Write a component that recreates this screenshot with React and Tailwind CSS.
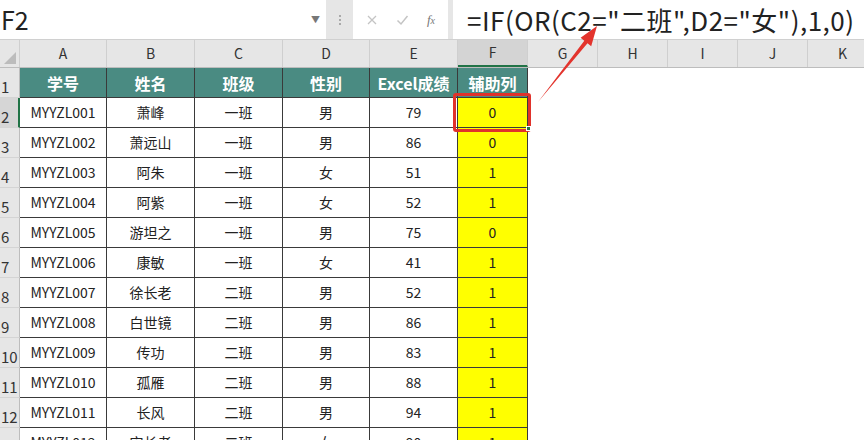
import React from "react";

const rows = [
  ["MYYZL001", "萧峰", "一班", "男", "79", "0"],
  ["MYYZL002", "萧远山", "一班", "男", "86", "0"],
  ["MYYZL003", "阿朱", "一班", "女", "51", "1"],
  ["MYYZL004", "阿紫", "一班", "女", "52", "1"],
  ["MYYZL005", "游坦之", "一班", "男", "75", "0"],
  ["MYYZL006", "康敏", "一班", "女", "41", "1"],
  ["MYYZL007", "徐长老", "二班", "男", "52", "1"],
  ["MYYZL008", "白世镜", "二班", "男", "86", "1"],
  ["MYYZL009", "传功", "二班", "男", "83", "1"],
  ["MYYZL010", "孤雁", "二班", "男", "88", "1"],
  ["MYYZL011", "长风", "二班", "男", "94", "1"],
  ["MYYZL012", "宋长老", "二班", "女", "90", "1"],
];

const cols = "grid-cols-[20px_87px_88px_88px_87px_88px_70px_70px_70px_70px_70px_70px_70px]";
const letters = ["A", "B", "C", "D", "E", "F", "G", "H", "I", "J", "K", "L"];
const heads = ["学号", "姓名", "班级", "性别", "Excel成绩", "辅助列"];

function RowLabel({ n, sel }) {
  return (
    <div
      className={`h-[30px] flex items-end pb-[3px] pl-[1px] text-[15px] leading-none text-[#333] border-b border-[#d4d4d4] ${
        sel ? "bg-[#d6d6d6] border-r-2 border-r-[#217346]" : "bg-[#e6e6e6] border-r border-r-[#bdbdbd]"
      }`}
    >
      {n}
    </div>
  );
}

export default function App() {
  return (
    <div
      className="relative w-[864px] h-[440px] overflow-hidden bg-white"
      style={{ fontFamily: '"Noto Sans CJK SC", "Noto Sans", sans-serif' }}
    >
      {/* formula bar */}
      <div className="flex h-[40px] bg-[#e6e6e6] border-b border-[#d0d0d0]">
        <div className="w-[326px] h-[39px] bg-white flex items-center justify-between pl-[1px] pr-[6px]">
          <span className="text-[25px] leading-none text-[#222]">F2</span>
          <span className="text-[9px] text-[#777]">▼</span>
        </div>
        <div className="w-[27px] flex items-center justify-center">
          <div className="flex flex-col gap-[2px]">
            <span className="w-[2px] h-[2px] bg-[#aaa]" />
            <span className="w-[2px] h-[2px] bg-[#aaa]" />
            <span className="w-[2px] h-[2px] bg-[#aaa]" />
          </div>
        </div>
        <div className="w-[95px] h-[39px] bg-white flex items-center justify-around px-[4px] text-[#bbb]">
          <svg width="12" height="12" viewBox="0 0 12 12">
            <path d="M2 2L10 10M10 2L2 10" stroke="#c4c4c4" strokeWidth="1.3" />
          </svg>
          <svg width="13" height="12" viewBox="0 0 13 12">
            <path d="M1.5 6.5L5 10L11.5 2" stroke="#c4c4c4" strokeWidth="1.5" fill="none" />
          </svg>
          <span className="text-[13px] italic text-[#777]" style={{ fontFamily: '"Liberation Serif", serif' }}>
            f<span className="text-[10px]">x</span>
          </span>
        </div>
        <div className="w-[5px]" />
        <div className="flex-1 h-[39px] bg-white flex items-center pl-[14px]">
          <span className="text-[26px] leading-none text-[#222] whitespace-nowrap tracking-[0.5px]">
            =IF(OR(C2="二班",D2="女"),1,0)
          </span>
        </div>
      </div>

      {/* column headers */}
      <div className={`grid ${cols} h-[28px] bg-[#e6e6e6] border-b border-[#bdbdbd]`}>
        <div className="relative border-r border-[#cfcfcf]">
          <div
            className="absolute right-[3px] bottom-[3px] w-0 h-0 border-l-[12px] border-l-transparent border-b-[12px] border-b-[#bcbcbc]"
          />
        </div>
        {letters.map((l, i) => (
          <div
            key={l}
            className={`flex items-center justify-center text-[14px] text-[#333] border-r border-[#cfcfcf] ${
              i === 5 ? "bg-[#d4d4d4] border-b-2 border-b-[#217346]" : ""
            }`}
          >
            {l}
          </div>
        ))}
      </div>

      {/* row 1 */}
      <div className={`grid ${cols}`}>
        <RowLabel n={1} />
        {heads.map((h) => (
          <div
            key={h}
            className="h-[30px] bg-[#4a8b82] border-r border-b border-[#3a3a3a] flex items-center justify-center text-white font-bold text-[16px]"
          >
            {h}
          </div>
        ))}
        {[0, 1, 2, 3, 4, 5].map((k) => (
          <div key={k} className="h-[30px]" />
        ))}
      </div>

      {rows.map((r, ri) => (
        <div key={ri} className={`grid ${cols}`}>
          <RowLabel n={ri + 2} sel={ri === 0} />
          {r.map((c, ci) => (
            <div
              key={ci}
              className={`h-[30px] border-r border-b border-[#3a3a3a] flex items-center justify-center text-[14px] text-[#222] ${
                ci === 5 ? "bg-[#ffff00]" : "bg-white"
              }`}
            >
              {c}
            </div>
          ))}
          {[0, 1, 2, 3, 4, 5].map((k) => (
            <div key={k} className="h-[30px]" />
          ))}
        </div>
      ))}

      {/* selection red box */}
      <div className="absolute left-[453px] top-[93px] w-[78px] h-[39px] border-[3px] border-[#e0322b] rounded-[3px]" />
      <div className="absolute left-[526px] top-[126px] w-[5px] h-[5px] bg-[#217346] border border-white" />

      {/* arrow */}
      <svg className="absolute left-0 top-0 pointer-events-none" width="864" height="440">
        <polygon
          points="538,102 587.5,43.2 591.2,46.2 597,26 580.6,37.8 584.3,40.8"
          fill="#e3342d"
        />
      </svg>
    </div>
  );
}
